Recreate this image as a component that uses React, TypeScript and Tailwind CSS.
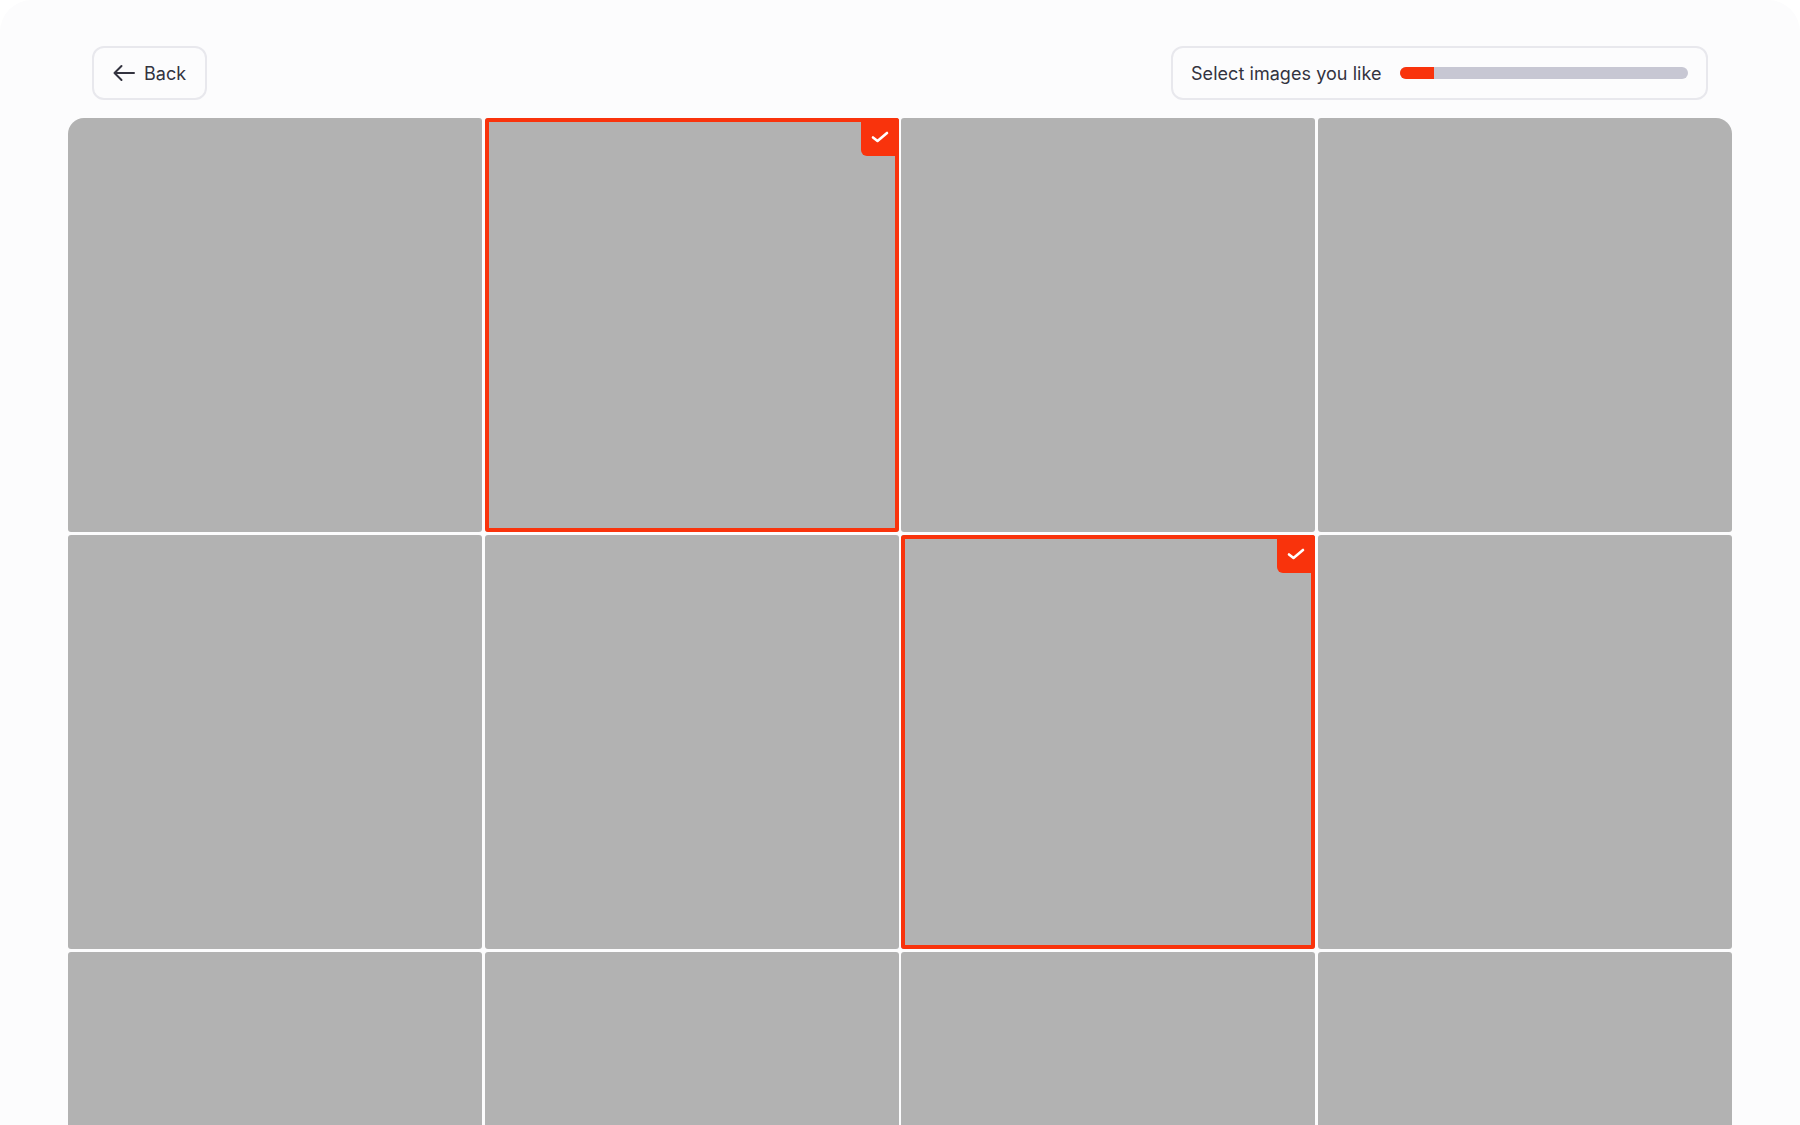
const tiles = Array.from({ length: 12 }, (_, i) => i);

function Check() {
  return (
    <svg width="18" height="14" viewBox="0 0 18 14" fill="none" stroke="#ffffff" strokeWidth="2.6" strokeLinecap="round" strokeLinejoin="round">
      <path d="M2 7.5 L6.5 11 L16 3" />
    </svg>
  );
}

function Tile({ index }: { index: number }) {
  const selected = index === 1 || index === 6;
  const corner = index === 0 ? "rounded-[3px] rounded-tl-[16px]" : index === 3 ? "rounded-[3px] rounded-tr-[16px]" : "rounded-[3px]";
  return (
    <div className={`relative aspect-square bg-[#b2b2b2] ${corner}`}>
      {selected && (
        <>
          <div className="absolute inset-0 rounded-[3px] border-4 border-[#f9330c]" />
          <div className="absolute top-0 right-0 flex h-[38px] w-[38px] items-center justify-center rounded-tr-[3px] rounded-bl-[6px] bg-[#f9330c]">
            <Check />
          </div>
        </>
      )}
    </div>
  );
}

export default function App() {
  return (
    <div className="h-[1125px] w-full overflow-hidden bg-white font-['Inter',sans-serif]">
      <div className="h-full rounded-t-[32px] bg-[#fcfcfd] pt-[46px]">
        <div className="flex items-center justify-between px-[92px]">
          <button className="flex h-[54px] w-[115px] items-center gap-[9px] rounded-[12px] border-2 border-[#e8e8ed] pl-[19px] text-[18px] text-[#33333f]">
            <svg width="22" height="18" viewBox="0 0 22 18" fill="none" stroke="#33333f" strokeWidth="2" strokeLinecap="round" strokeLinejoin="round">
              <path d="M21 9 H1.5 M8.5 2 L1.5 9 L8.5 16" />
            </svg>
            <span>Back</span>
          </button>
          <div className="flex h-[54px] w-[537px] items-center justify-between rounded-[12px] border-2 border-[#e8e8ed] pr-[18px] pl-[18px]">
            <span className="text-[18px] tracking-[0.05px] text-[#33333f]">Select images you like</span>
            <div className="h-[12px] w-[288px] overflow-hidden rounded-full bg-[#c7c7d3]">
              <div className="h-full w-[34px] bg-[#f9330c]" />
            </div>
          </div>
        </div>
        <div className="mt-[18px] grid grid-cols-4 gap-x-[2.5px] gap-y-[3px] px-[68px]">
          {tiles.map((i) => (
            <Tile key={i} index={i} />
          ))}
        </div>
      </div>
    </div>
  );
}
